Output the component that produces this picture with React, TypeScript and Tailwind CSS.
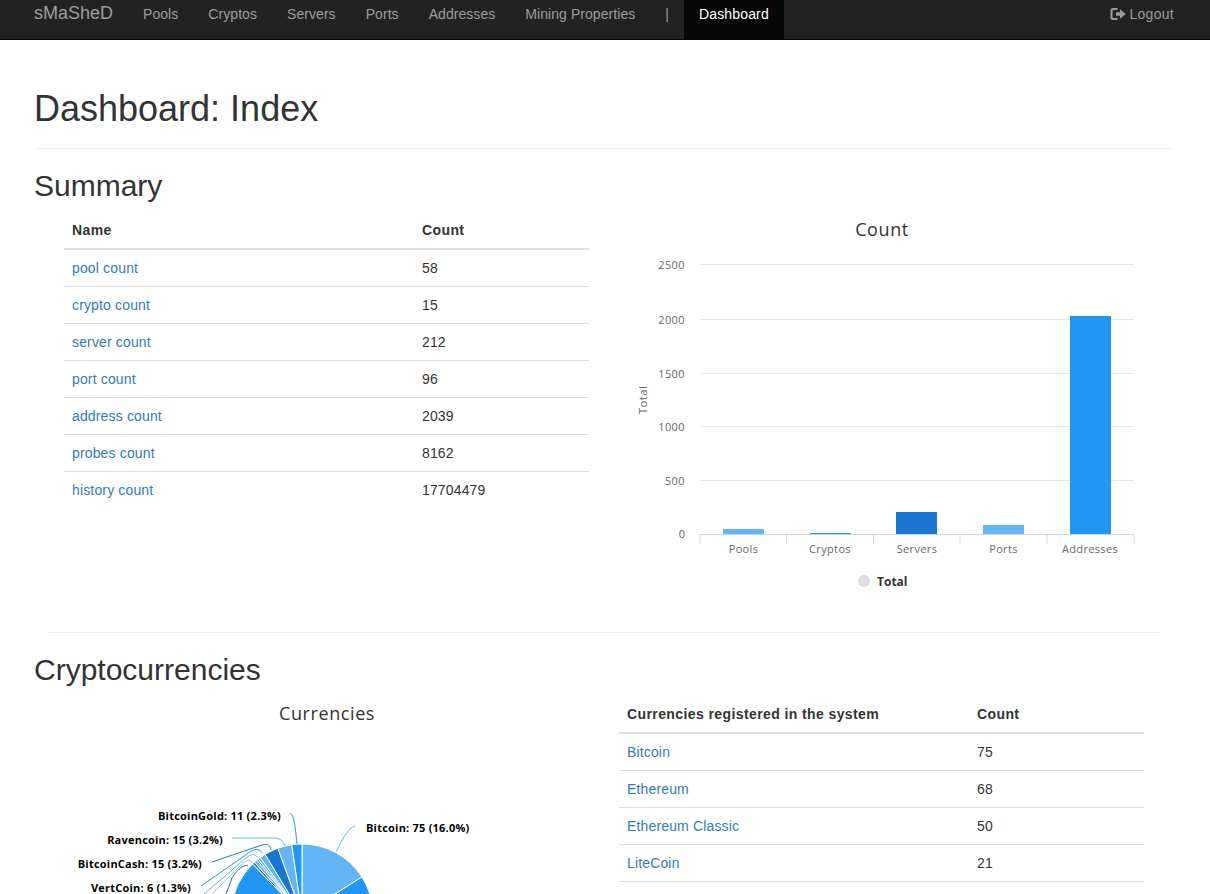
const navItems = ["Pools", "Cryptos", "Servers", "Ports", "Addresses", "Mining Properties", "|"];

function DataTable({ head, rows, lastLine }: { head: [string, string]; rows: [string, string][]; lastLine?: boolean }) {
  return (
    <table className="w-full self-start border-collapse text-[14px] leading-[20px] tracking-[0.15px] text-[#333]">
      <thead>
        <tr>
          <th className="w-[350px] border-b-2 border-[#ddd] p-2 text-left font-bold tracking-[0.4px]">{head[0]}</th>
          <th className="border-b-2 border-[#ddd] p-2 text-left font-bold tracking-[0.4px]">{head[1]}</th>
        </tr>
      </thead>
      <tbody className={lastLine ? "border-b border-[#ddd]" : ""}>
        {rows.map(([name, count], i) => (
          <tr key={name}>
            <td className={`p-2 ${i ? "border-t border-[#ddd]" : ""}`}>
              <a className="text-[#337ab7]" href="#">{name}</a>
            </td>
            <td className={`p-2 ${i ? "border-t border-[#ddd]" : ""}`}>{count}</td>
          </tr>
        ))}
      </tbody>
    </table>
  );
}

const chartFont = { fontFamily: "'Open Sans', 'DejaVu Sans', sans-serif" };

function BarChart() {
  const ox = -619;
  const oy = -212;
  const ticks = [
    [2500, 264.5],
    [2000, 319.5],
    [1500, 373.5],
    [1000, 426.5],
    [500, 480.5],
  ];
  const bars = [
    ["Pools", 723, 529, "#64b5f6", 743.5],
    ["Cryptos", 810, 533, "#2196f3", 830],
    ["Servers", 896, 512, "#1976d2", 917],
    ["Ports", 983, 525, "#64b5f6", 1003.5],
    ["Addresses", 1070, 316, "#2196f3", 1090],
  ] as const;
  return (
    <svg width="525" height="400" className="block" style={chartFont}>
      <g transform={`translate(${ox} ${oy})`}>
        <text x="882" y="236" textAnchor="middle" fontSize="18" letterSpacing="0.6" fill="#333">Count</text>
        {ticks.map(([v, y]) => (
          <g key={v}>
            <line x1="700" x2="1134" y1={y} y2={y} stroke="#e6e6e6" />
            <text x="685" y={y + 4} textAnchor="end" fontSize="11" letterSpacing="0.4" fill="#666">{v}</text>
          </g>
        ))}
        <text x="685" y="538" textAnchor="end" fontSize="11" fill="#666">0</text>
        <text transform="translate(647 400) rotate(-90)" textAnchor="middle" fontSize="11.5" letterSpacing="0.4" fill="#666">Total</text>
        {bars.map(([name, x, top, color, cx]) => (
          <g key={name}>
            <rect x={x} y={top} width="41" height={534 - top} fill={color} />
            <text x={cx} y="553" textAnchor="middle" fontSize="11" letterSpacing="0.35" fill="#666">{name}</text>
          </g>
        ))}
        <line x1="700" x2="1134" y1="534.5" y2="534.5" stroke="#ccd6eb" />
        {[700, 786.5, 873.5, 960, 1047, 1134].map((x) => (
          <line key={x} x1={x} x2={x} y1="534" y2="544" stroke="#ccd6eb" />
        ))}
        <circle cx="864" cy="581" r="6" fill="#ddd" />
        <text x="877" y="586" fontSize="12" fontWeight="700" fill="#333">Total</text>
      </g>
    </svg>
  );
}

const CX = 302;
const CY = 915;
const R = 71;

function arc(fromDeg: number, toDeg: number) {
  const a = ((fromDeg - 90) * Math.PI) / 180;
  const b = ((toDeg - 90) * Math.PI) / 180;
  const large = toDeg - fromDeg > 180 ? 1 : 0;
  return `M${CX} ${CY}L${CX + R * Math.cos(a)} ${CY + R * Math.sin(a)}A${R} ${R} 0 ${large} 1 ${CX + R * Math.cos(b)} ${CY + R * Math.sin(b)}Z`;
}

function PieChart() {
  const ox = -64;
  const oy = -696;
  const slices: [number, number, string][] = [
    [0, 57.6, "#64b5f6"],
    [57.6, 110, "#2196f3"],
    [110, 148, "#1976d2"],
    [148, 316, "#2196f3"],
    [316, 318, "#1976d2"],
    [318, 320.5, "#64b5f6"],
    [320.5, 322, "#2196f3"],
    [322, 324, "#64b5f6"],
    [324, 328.7, "#64b5f6"],
    [328.7, 340.2, "#1976d2"],
    [340.2, 351.7, "#64b5f6"],
    [351.7, 360, "#2196f3"],
  ];
  const lines: [string, string][] = [
    ["M336 852C342 840 348 828 355 826", "#64b5f6"],
    ["M290 813C294 815 295 825 297 844", "#2196f3"],
    ["M232 838L272 838C280 838 283 840 285 846", "#64b5f6"],
    ["M212 862L262 845C268 843 270 846 271 850", "#1976d2"],
    ["M201 886L250 852C256 848 260 849 262 853", "#2196f3"],
    ["M204 894L246 858C252 853 255 854 257 857", "#64b5f6"],
    ["M212 894L240 866C247 859 250 860 252 862", "#90caf9"],
    ["M226 894L232 878C238 868 245 864 248 866", "#1976d2"],
  ];
  const labels = [
    ["Bitcoin: 75 (16.0%)", 366, 832, "start"],
    ["BitcoinGold: 11 (2.3%)", 281, 820, "end"],
    ["Ravencoin: 15 (3.2%)", 223, 844, "end"],
    ["BitcoinCash: 15 (3.2%)", 202, 868, "end"],
    ["VertCoin: 6 (1.3%)", 191, 892, "end"],
  ] as const;
  return (
    <svg width="525" height="300" className="block" style={chartFont}>
      <g transform={`translate(${ox} ${oy})`}>
        <text x="327" y="720" textAnchor="middle" fontSize="18" letterSpacing="0.6" fill="#333">Currencies</text>
        {lines.map(([d, c]) => (
          <path key={d} d={d} fill="none" stroke={c} />
        ))}
        {slices.map(([a, b, c]) => (
          <path key={a} d={arc(a, b)} fill={c} stroke="#fff" />
        ))}
        {labels.map(([t, x, y, anchor]) => (
          <text key={t} x={x} y={y} textAnchor={anchor} fontSize="11" fontWeight="700" letterSpacing="0.22" fill="#000">{t}</text>
        ))}
      </g>
    </svg>
  );
}

export default function App() {
  return (
    <div className="h-[894px] overflow-hidden bg-white font-['Liberation_Sans',Arial,sans-serif] text-[#333]">
      <nav className="flex h-[40px] border-b border-[#080808] bg-[#222] pl-[19px] pr-[21px] text-[14px] leading-[20px] tracking-[0.06px] text-[#9d9d9d]">
        <a href="#" className="px-[15px] pt-[3px] text-[18px] tracking-normal">sMaSheD</a>
        {navItems.map((item) => (
          <a key={item} href="#" className="px-[15px] pt-[4px]">{item}</a>
        ))}
        <a href="#" className="w-[100px] bg-[#080808] px-[15px] pt-[4px] tracking-[0.15px] text-white">Dashboard</a>
        <a href="#" className="ml-auto flex items-start gap-[3px] px-[15px] pt-[4px] tracking-[0.3px]">
          <svg width="16" height="14" viewBox="0 0 16 14" className="mt-[3px]" fill="#9d9d9d">
            <path d="M0.5 3.5Q0.5 1 3 1H7.5V3H3.5Q2.5 3 2.5 4V10Q2.5 11 3.5 11H7.5V13H3Q0.5 13 0.5 10.5Z" />
            <path d="M6 5.3H10V2.3L15.8 7L10 11.7V8.7H6Z" />
          </svg>
          Logout
        </a>
      </nav>
      <main className="pl-[34px] pr-[36px]">
        <h1 className="mt-[49px] text-[36px] font-medium leading-[40px] text-[#333]">Dashboard: Index</h1>
        <hr className="mt-[19px] border-[#eee]" />
        <h2 className="mt-[20px] text-[30px] font-medium leading-[33px]">Summary</h2>
        <section className="mt-[10px] grid h-[420px] grid-cols-2 gap-[30px] px-[30px]">
          <DataTable
            head={["Name", "Count"]}
            rows={[
              ["pool count", "58"],
              ["crypto count", "15"],
              ["server count", "212"],
              ["port count", "96"],
              ["address count", "2039"],
              ["probes count", "8162"],
              ["history count", "17704479"],
            ]}
          />
          <BarChart />
        </section>
        <hr className="mx-[15px] border-[#eee]" />
        <h2 className="mt-[20px] text-[30px] font-medium leading-[33px]">Cryptocurrencies</h2>
        <section className="mt-[10px] grid grid-cols-2 gap-[30px] px-[30px]">
          <PieChart />
          <DataTable
            lastLine
            head={["Currencies registered in the system", "Count"]}
            rows={[
              ["Bitcoin", "75"],
              ["Ethereum", "68"],
              ["Ethereum Classic", "50"],
              ["LiteCoin", "21"],
            ]}
          />
        </section>
      </main>
    </div>
  );
}
